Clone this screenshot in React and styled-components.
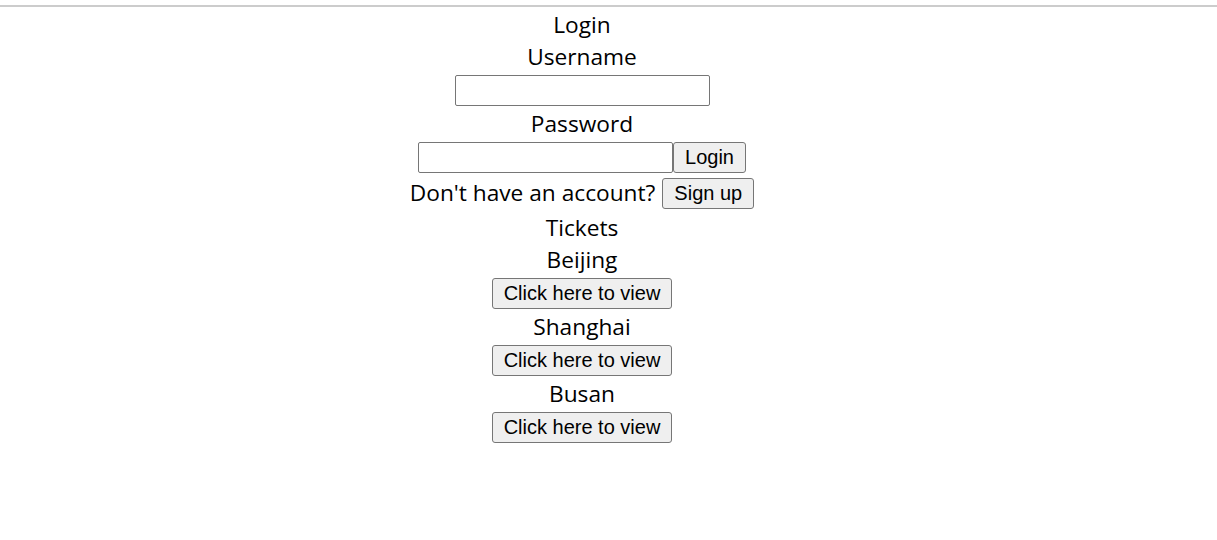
import React from 'react';
import styled, { createGlobalStyle } from 'styled-components';

const GlobalStyle = createGlobalStyle`
  body {
    margin: 0;
    background: #fff;
    color: #000;
    font-family: "Open Sans", "Noto Sans", sans-serif;
  }
`;

const TopRule = styled.div`
  height: 2px;
  margin-top: 5px;
  background: #cccccc;
`;

const Page = styled.div`
  width: 1164px;
  display: flex;
  flex-direction: column;
  align-items: center;
  padding-top: 2px;
`;

const Heading = styled.div`
  font-size: 22.7px;
  line-height: 32px;
  height: 32px;
`;

const Row = styled.div`
  display: flex;
  align-items: center;
  margin: ${props => props.spacing || '0'};
`;

const Input = styled.input`
  box-sizing: border-box;
  width: 255px;
  height: 31px;
  border: 1px solid #767676;
  border-radius: 2px;
  padding: 1px 2px;
  font-size: 16px;
  margin: ${props => props.spacing || '0'};
`;

const Button = styled.button`
  box-sizing: border-box;
  height: 31px;
  padding: 0 ${props => props.pad || 11}px;
  border: 1px solid #767676;
  border-radius: 3px;
  background: #efefef;
  color: #000;
  font-family: "Liberation Sans", Arial, sans-serif;
  font-size: 20px;
  margin: ${props => props.spacing || '0'};
`;

const Prompt = styled.span`
  font-size: 22.7px;
  line-height: 32px;
`;

const cities = ['Beijing', 'Shanghai', 'Busan'];

const App = () => {
  return (
    <React.Fragment>
      <GlobalStyle />
      <TopRule />
      <Page>
        <Heading>Login</Heading>
        <Heading>Username</Heading>
        <Input type="text" spacing="2px 0" />
        <Heading>Password</Heading>
        <Row spacing="2px 0 0">
          <Input type="password" />
          <Button>Login</Button>
        </Row>
        <Row spacing="4px 0 3px">
          <Prompt>Don't have an account?</Prompt>
          <Button spacing="0 0 0 7px">Sign up</Button>
        </Row>
        <Heading>Tickets</Heading>
        {cities.map(city => (
          <React.Fragment key={city}>
            <Heading>{city}</Heading>
            <Button spacing="1.5px 0 2.5px">Click here to view</Button>
          </React.Fragment>
        ))}
      </Page>
    </React.Fragment>
  );
};

export default App;
